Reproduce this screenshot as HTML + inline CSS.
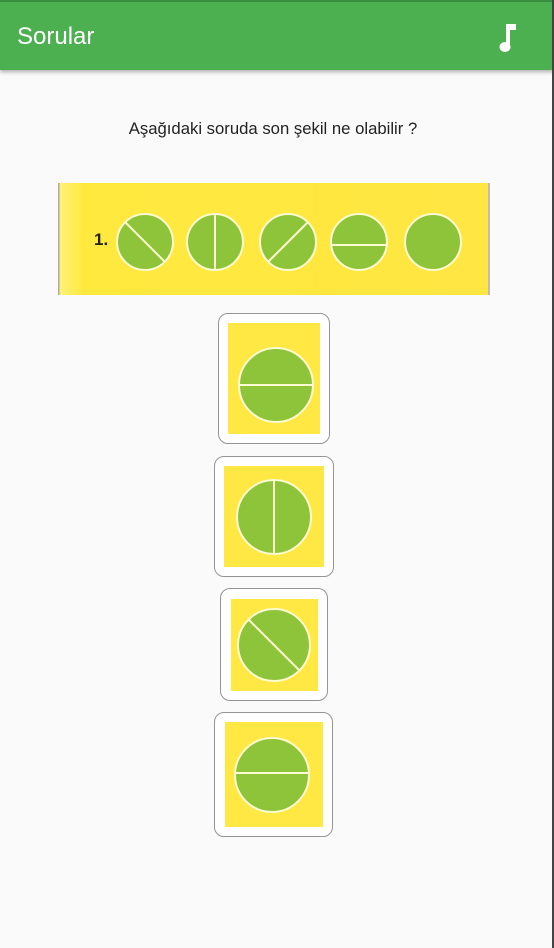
<!DOCTYPE html>
<html><head><meta charset="utf-8"><style>
body{margin:0;width:554px;height:948px;background:#fafafa;position:relative;overflow:hidden;font-family:"Liberation Sans",sans-serif}
.bar{position:absolute;left:0;top:0;width:554px;height:70px;background:#4caf50;border-top:2px solid #3b8e3e;box-sizing:border-box;box-shadow:0 2px 4px rgba(0,0,0,.3)}
.title{position:absolute;left:17px;top:21px;color:#fff;font-size:24px}
.edge{position:absolute;right:0;top:0;width:2px;height:948px;background:#444}
.q{position:absolute;top:119px;left:0;width:546px;text-align:center;font-size:16.7px;color:#222}
.card{position:absolute;border:1.3px solid #949494;border-radius:10px;background:#fff;box-sizing:border-box}
svg{position:absolute}
</style></head><body>
<div class="bar"><div class="title">Sorular</div>
<svg style="left:496px;top:19px" width="24" height="32" viewBox="0 0 24 32"><rect x="10" y="3" width="4" height="24" fill="#fff"/><rect x="10" y="3" width="10" height="6" fill="#fff"/><ellipse cx="9" cy="26" rx="5.5" ry="5" fill="#fff"/></svg>
</div>
<div class="edge"></div>
<div class="q">Aşağıdaki soruda son şekil ne olabilir ?</div>
<svg style="left:58px;top:183px" width="432" height="112" viewBox="0 0 432 112">
<defs><linearGradient id="g" x1="0" x2="1"><stop offset="0" stop-color="#fff27a"/><stop offset="0.06" stop-color="#ffe93e"/><stop offset="1" stop-color="#ffe642"/></linearGradient></defs>
<rect width="432" height="112" fill="url(#g)"/>
<rect x="0" y="0" width="1.5" height="112" fill="#aaa"/><rect x="430" y="0" width="2" height="112" fill="#bbb"/>
<text x="36" y="62" font-size="17" font-weight="bold" fill="#222" font-family="Liberation Sans">1.</text>
<g fill="#8ec43a" stroke="#fdfbd0" stroke-width="2">
<circle cx="87" cy="59" r="28"/><circle cx="157" cy="59" r="28"/><circle cx="230" cy="59" r="28"/><circle cx="301" cy="59" r="28"/><circle cx="375" cy="59" r="28"/>
<line x1="67" y1="39" x2="107" y2="79"/><line x1="157" y1="31" x2="157" y2="87"/><line x1="250" y1="39" x2="210" y2="79"/><line x1="273" y1="62" x2="329" y2="62"/>
</g></svg>
<div class="card" style="left:218px;top:313px;width:112px;height:131px"></div>
<svg style="left:228px;top:323px" width="92" height="111"><rect width="92" height="111" fill="#ffe843"/><g fill="#8ec43a" stroke="#fdfbd0" stroke-width="2"><circle cx="48" cy="62" r="37"/><line x1="11" y1="62" x2="85" y2="62"/></g></svg>
<div class="card" style="left:214px;top:456px;width:120px;height:121px"></div>
<svg style="left:224px;top:466px" width="100" height="101"><rect width="100" height="101" fill="#ffe843"/><g fill="#8ec43a" stroke="#fdfbd0" stroke-width="2"><circle cx="50" cy="51" r="37"/><line x1="50" y1="14" x2="50" y2="88"/></g></svg>
<div class="card" style="left:220px;top:588px;width:108px;height:113px"></div>
<svg style="left:231px;top:599px" width="87" height="92"><rect width="87" height="92" fill="#ffe843"/><g fill="#8ec43a" stroke="#fdfbd0" stroke-width="2"><circle cx="43" cy="46" r="36"/><line x1="18" y1="21" x2="68" y2="71"/></g></svg>
<div class="card" style="left:214px;top:712px;width:119px;height:125px"></div>
<svg style="left:225px;top:722px" width="98" height="105"><rect width="98" height="105" fill="#ffe843"/><g fill="#8ec43a" stroke="#fdfbd0" stroke-width="2"><circle cx="47" cy="53" r="37"/><line x1="10" y1="51" x2="84" y2="51"/></g></svg>
</body></html>
